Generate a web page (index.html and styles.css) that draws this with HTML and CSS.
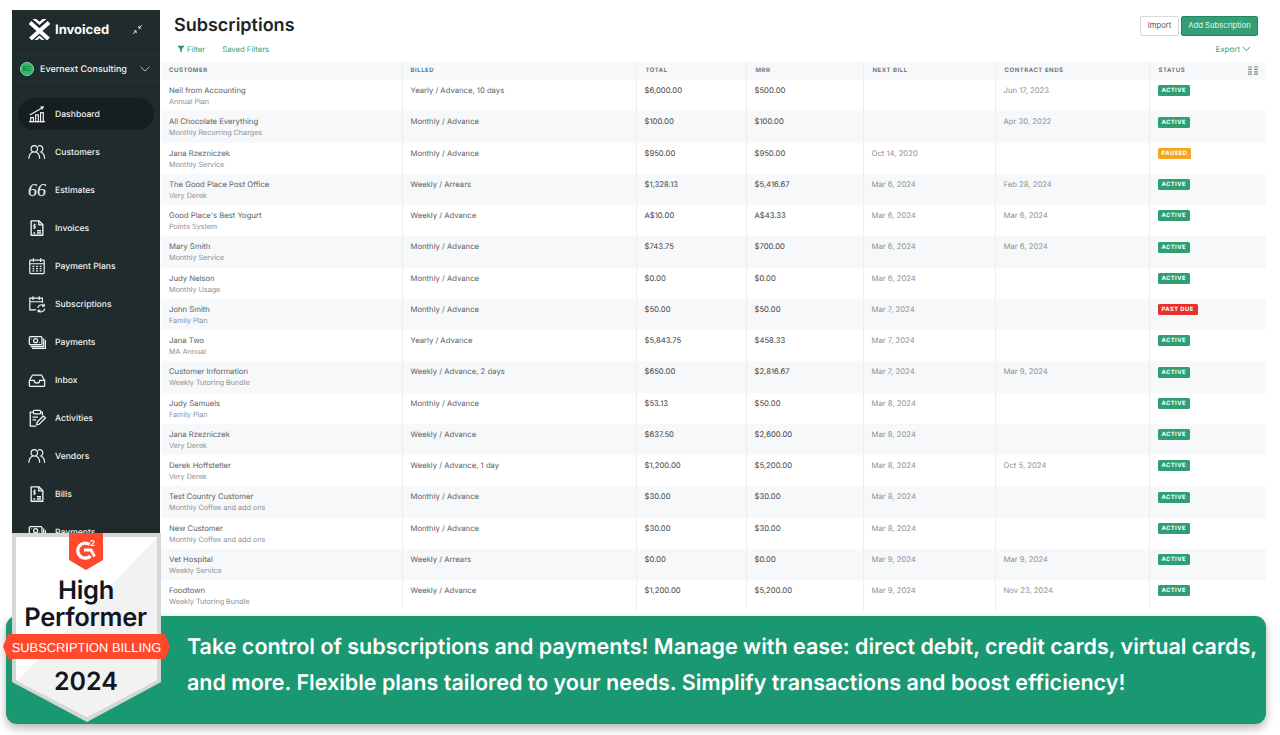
FILE: index.html
```html
<!DOCTYPE html>
<html lang="en">
<head>
<meta charset="utf-8">
<title>Subscriptions</title>
<link rel="stylesheet" href="styles.css">
</head>
<body>
<svg class="defs" width="0" height="0" aria-hidden="true">
  <symbol id="i-people" viewBox="0 0 20 20"><g fill="none" stroke="currentColor" stroke-width="1.300" stroke-linecap="round"><circle cx="7" cy="6.5" r="3.6"/><path d="M1 17c.3-3.8 2.300-6.300 4.300-7M8.700 10c2 .7 4 3.200 4.300 7"/><path d="M11.500 3.300c2.600-1 5 .8 5 3.300 0 1.600-1 2.900-2.200 3.400 2 .7 3.800 3.200 4.200 7"/></g></symbol>
  <symbol id="i-doc" viewBox="0 0 20 20"><g fill="none" stroke="currentColor" stroke-width="1.500" stroke-linejoin="round"><path d="M3.500 2h8.500l4.500 4.500V18h-13z"/><path d="M12 2v4.500h4.500"/><path d="M10 13h4.500M10 15.500h4.500M6 15.500h2"/><path d="M9 6.500H6.700c-1 0-1 1.700 0 1.700h1c1 0 1 1.800 0 1.800H5.500M7.200 5v6.300" stroke-width="1"/></g></symbol>
  <symbol id="i-cash" viewBox="0 0 20 20"><g fill="none" stroke="currentColor" stroke-width="1.400" stroke-linejoin="round"><rect x="1.500" y="4" width="14" height="9" rx="1"/><circle cx="8.500" cy="8.500" r="2.200"/><path d="M3.800 6.200h.6M12.600 10.800h.6"/><path d="M3.500 15h14V6.500M5 17h14.500V8.500" stroke-linecap="round"/></g></symbol>
</svg>

<div class="app">
  <aside class="sidebar">
    <div class="brand">
      <svg class="logo" viewBox="0 0 21 21" aria-hidden="true"><path d="M1 3.500 19.500 20M20 3.500 1.500 20" fill="none" stroke="#fff" stroke-width="4"/><path d="M3.500 0h3.800l3.200 2.700L13.700 0h3.800l-7 6z" fill="#fff"/><path d="M5.500 21l5-4.500 5 4.500h-3l-2-1.800-2 1.800z" fill="#fff"/></svg>
      <span class="brand-name">Invoiced</span>
      <svg class="collapse" viewBox="0 0 12 12" aria-hidden="true"><path d="M11 1 7.500 4.500M7.500 2v2.500H10M1 11l3.500-3.500M4.500 10V7.500H2" fill="none" stroke="#e8ecec" stroke-width="1"/></svg>
    </div>
    <div class="company">
      <span class="avatar">EC</span>
      <span class="company-name">Evernext Consulting</span>
      <svg class="chev" viewBox="0 0 10 6" aria-hidden="true"><path d="M.5.8 5 5 9.500.8" fill="none" stroke="#aeb6b7" stroke-width="1"/></svg>
    </div>
    <nav class="nav">
      <a class="nav-item is-active">
        <svg class="nav-icon" viewBox="0 0 20 20" aria-hidden="true"><g fill="none" stroke="currentColor" stroke-width="1.300"><path d="M1 18.500h18"/><rect x="3" y="14" width="3" height="4.500"/><rect x="8.500" y="11" width="3" height="7.500"/><rect x="14" y="8.500" width="3" height="10"/><path d="M2 11 15 3.500"/></g><path d="M18 1.500l-4.500.2 2.300 3.800z" fill="currentColor"/></svg>
        <span>Dashboard</span>
      </a>
      <a class="nav-item"><svg class="nav-icon" aria-hidden="true"><use href="#i-people"/></svg><span>Customers</span></a>
      <a class="nav-item"><span class="nav-icon quote">66</span><span>Estimates</span></a>
      <a class="nav-item"><svg class="nav-icon" aria-hidden="true"><use href="#i-doc"/></svg><span>Invoices</span></a>
      <a class="nav-item">
        <svg class="nav-icon" viewBox="0 0 20 20" aria-hidden="true"><g fill="none" stroke="currentColor" stroke-width="1.300"><rect x="2" y="3.500" width="16" height="15" rx="1"/><path d="M2 7.500h16M6 1.500v4M14 1.500v4"/><path d="M5 10.500h2M9 10.500h2M13 10.500h2M5 13h2M9 13h2M13 13h2M5 15.500h2M9 15.500h2M13 15.500h2" stroke-width="1.300"/></g></svg>
        <span>Payment Plans</span>
      </a>
      <a class="nav-item">
        <svg class="nav-icon" viewBox="0 0 20 20" aria-hidden="true"><g fill="none" stroke="currentColor" stroke-width="1.300"><path d="M9 16.500H2V3.500h14V9M2 7.500h14M5.500 1.500v4M12.500 1.500v4"/><path d="M11 14.500a4 4 0 0 1 6.800-2.500M18.500 15a4 4 0 0 1-6.800 2.500M18 9.800V12.300h-2.500M11.300 19.500V17h2.500"/></g></svg>
        <span>Subscriptions</span>
      </a>
      <a class="nav-item"><svg class="nav-icon" aria-hidden="true"><use href="#i-cash"/></svg><span>Payments</span></a>
      <a class="nav-item">
        <svg class="nav-icon" viewBox="0 0 20 20" aria-hidden="true"><g fill="none" stroke="currentColor" stroke-width="1.400" stroke-linejoin="round"><path d="M1.500 10.500 5 4.500h10l3.500 6V16a1 1 0 0 1-1 1h-15a1 1 0 0 1-1-1z"/><path d="M1.500 10.500h5.500c0 2 1.200 3 3 3s3-1 3-3h5.500"/></g></svg>
        <span>Inbox</span>
      </a>
      <a class="nav-item">
        <svg class="nav-icon" viewBox="0 0 20 20" aria-hidden="true"><g fill="none" stroke="currentColor" stroke-width="1.400" stroke-linejoin="round"><path d="M6 3.500H2.500V19H9M14 3.500h2V7"/><rect x="6" y="1.500" width="8" height="4" rx="1"/><path d="M5 9h6M5 12h4M9.500 17.500l.7-3L17 7.700l2.300 2.300-6.800 6.800z"/></g></svg>
        <span>Activities</span>
      </a>
      <a class="nav-item"><svg class="nav-icon" aria-hidden="true"><use href="#i-people"/></svg><span>Vendors</span></a>
      <a class="nav-item"><svg class="nav-icon" aria-hidden="true"><use href="#i-doc"/></svg><span>Bills</span></a>
      <a class="nav-item"><svg class="nav-icon" aria-hidden="true"><use href="#i-cash"/></svg><span>Payments</span></a>
    </nav>
  </aside>

  <main class="main">
    <header class="page-head">
      <div class="title-row">
        <h1>Subscriptions</h1>
        <div class="actions">
          <button class="btn">Import</button>
          <button class="btn btn-primary">Add Subscription</button>
        </div>
      </div>
      <div class="filter-row">
        <a class="link filter"><svg class="funnel" viewBox="0 0 10 10" aria-hidden="true"><path d="M.5 1h9L6 5.200V9.500L4 8V5.200z" fill="#1f9d72"/></svg>Filter</a>
        <a class="link">Saved Filters</a>
        <a class="link export">Export<svg class="export-chev" viewBox="0 0 10 6" aria-hidden="true"><path d="M1 1l4 4 4-4" fill="none" stroke="#1f9d72" stroke-width="1"/></svg></a>
      </div>
    </header>

    <table class="grid">
      <colgroup>
        <col class="c1"><col class="c2"><col class="c3"><col class="c4"><col class="c5"><col class="c6"><col class="c7">
      </colgroup>
      <thead>
        <tr>
          <th>Customer</th><th>Billed</th><th>Total</th><th>MRR</th><th>Next Bill</th><th>Contract Ends</th>
          <th class="status-head">Status<svg class="cols" viewBox="0 0 10 9" aria-hidden="true"><path d="M0 1h4M6 1h4M0 3.400h4M6 3.400h4M0 5.800h4M6 5.800h4M0 8.200h4M6 8.200h4" stroke="#8a9094" stroke-width="1.200"/></svg></th>
        </tr>
      </thead>
      <tbody>
        <tr><td><div class="name">Neil from Accounting</div><div class="sub">Annual Plan</div></td><td>Yearly / Advance, 10 days</td><td class="amt">$6,000.00</td><td class="amt">$500.00</td><td class="date"></td><td class="date">Jun 17, 2023</td><td><span class="tag active">Active</span></td></tr>
        <tr><td><div class="name">All Chocolate Everything</div><div class="sub">Monthly Recurring Charges</div></td><td>Monthly / Advance</td><td class="amt">$100.00</td><td class="amt">$100.00</td><td class="date"></td><td class="date">Apr 30, 2022</td><td><span class="tag active">Active</span></td></tr>
        <tr><td><div class="name">Jana Rzezniczek</div><div class="sub">Monthly Service</div></td><td>Monthly / Advance</td><td class="amt">$950.00</td><td class="amt">$950.00</td><td class="date">Oct 14, 2020</td><td class="date"></td><td><span class="tag paused">Paused</span></td></tr>
        <tr><td><div class="name">The Good Place Post Office</div><div class="sub">Very Derek</div></td><td>Weekly / Arrears</td><td class="amt">$1,328.13</td><td class="amt">$5,416.67</td><td class="date">Mar 6, 2024</td><td class="date">Feb 28, 2024</td><td><span class="tag active">Active</span></td></tr>
        <tr><td><div class="name">Good Place's Best Yogurt</div><div class="sub">Points System</div></td><td>Weekly / Advance</td><td class="amt">A$10.00</td><td class="amt">A$43.33</td><td class="date">Mar 6, 2024</td><td class="date">Mar 6, 2024</td><td><span class="tag active">Active</span></td></tr>
        <tr><td><div class="name">Mary Smith</div><div class="sub">Monthly Service</div></td><td>Monthly / Advance</td><td class="amt">$743.75</td><td class="amt">$700.00</td><td class="date">Mar 6, 2024</td><td class="date">Mar 6, 2024</td><td><span class="tag active">Active</span></td></tr>
        <tr><td><div class="name">Judy Nelson</div><div class="sub">Monthly Usage</div></td><td>Monthly / Advance</td><td class="amt">$0.00</td><td class="amt">$0.00</td><td class="date">Mar 6, 2024</td><td class="date"></td><td><span class="tag active">Active</span></td></tr>
        <tr><td><div class="name">John Smith</div><div class="sub">Family Plan</div></td><td>Monthly / Advance</td><td class="amt">$50.00</td><td class="amt">$50.00</td><td class="date">Mar 7, 2024</td><td class="date"></td><td><span class="tag due">Past Due</span></td></tr>
        <tr><td><div class="name">Jana Two</div><div class="sub">MA Annual</div></td><td>Yearly / Advance</td><td class="amt">$5,843.75</td><td class="amt">$458.33</td><td class="date">Mar 7, 2024</td><td class="date"></td><td><span class="tag active">Active</span></td></tr>
        <tr><td><div class="name">Customer Information</div><div class="sub">Weekly Tutoring Bundle</div></td><td>Weekly / Advance, 2 days</td><td class="amt">$650.00</td><td class="amt">$2,816.67</td><td class="date">Mar 7, 2024</td><td class="date">Mar 9, 2024</td><td><span class="tag active">Active</span></td></tr>
        <tr><td><div class="name">Judy Samuels</div><div class="sub">Family Plan</div></td><td>Monthly / Advance</td><td class="amt">$53.13</td><td class="amt">$50.00</td><td class="date">Mar 8, 2024</td><td class="date"></td><td><span class="tag active">Active</span></td></tr>
        <tr><td><div class="name">Jana Rzezniczek</div><div class="sub">Very Derek</div></td><td>Weekly / Advance</td><td class="amt">$637.50</td><td class="amt">$2,600.00</td><td class="date">Mar 8, 2024</td><td class="date"></td><td><span class="tag active">Active</span></td></tr>
        <tr><td><div class="name">Derek Hoffstetler</div><div class="sub">Very Derek</div></td><td>Weekly / Advance, 1 day</td><td class="amt">$1,200.00</td><td class="amt">$5,200.00</td><td class="date">Mar 8, 2024</td><td class="date">Oct 5, 2024</td><td><span class="tag active">Active</span></td></tr>
        <tr><td><div class="name">Test Country Customer</div><div class="sub">Monthly Coffee and add ons</div></td><td>Monthly / Advance</td><td class="amt">$30.00</td><td class="amt">$30.00</td><td class="date">Mar 8, 2024</td><td class="date"></td><td><span class="tag active">Active</span></td></tr>
        <tr><td><div class="name">New Customer</div><div class="sub">Monthly Coffee and add ons</div></td><td>Monthly / Advance</td><td class="amt">$30.00</td><td class="amt">$30.00</td><td class="date">Mar 8, 2024</td><td class="date"></td><td><span class="tag active">Active</span></td></tr>
        <tr><td><div class="name">Vet Hospital</div><div class="sub">Weekly Service</div></td><td>Weekly / Arrears</td><td class="amt">$0.00</td><td class="amt">$0.00</td><td class="date">Mar 9, 2024</td><td class="date">Mar 9, 2024</td><td><span class="tag active">Active</span></td></tr>
        <tr><td><div class="name">Foodtown</div><div class="sub">Weekly Tutoring Bundle</div></td><td>Weekly / Advance</td><td class="amt">$1,200.00</td><td class="amt">$5,200.00</td><td class="date">Mar 9, 2024</td><td class="date">Nov 23, 2024</td><td><span class="tag active">Active</span></td></tr>
      </tbody>
    </table>
  </main>
</div>

<aside class="promo">
  <p>Take control of subscriptions and payments! Manage with ease: direct debit, credit cards, virtual cards, and more. Flexible plans tailored to your needs. Simplify transactions and boost efficiency!</p>
</aside>

<svg class="badge" viewBox="0 0 174 192" aria-label="G2 High Performer badge">
  <path d="M9 0H158V149L84 189 9 149z" fill="#d5d7d6"/>
  <path d="M13 4H154V147L84 184 13 147z" fill="#fff"/>
  <path d="M154 5V147L84 184 14 148z" fill="#f2f2f3"/>
  <path d="M66 0h34v27l-17 10-17-10z" fill="#ff492c"/>
  <path d="M86.500 11.500a7.500 7.500 0 1 0 1 11.500" fill="none" stroke="#fff" stroke-width="3.200"/>
  <path d="M81 17h7l3.500 6.500" fill="none" stroke="#fff" stroke-width="2.800"/>
  <text x="89.500" y="12.500" class="g2-two">2</text>
  <text x="83" y="66" class="b-title">High</text>
  <text x="82.500" y="93" class="b-title">Performer</text>
  <path d="M5 101H162L167 113.500 162 126H5L0 113.500z" fill="#ff492c"/>
  <text x="83.500" y="118.500" class="b-cat">SUBSCRIPTION BILLING</text>
  <text x="83" y="157" class="b-year">2024</text>
</svg>
</body>
</html>
```
FILE: styles.css
```css
* { box-sizing: border-box; }
html, body { margin: 0; height: 100%; }
body {
  background: #fff;
  font-family: Inter, "Liberation Sans", sans-serif;
  overflow: hidden;
  position: relative;
  text-rendering: geometricPrecision;
}
.defs { position: absolute; }

.app {
  display: flex;
  height: 606px;
  margin: 10px 14px 0 12px;
  overflow: hidden;
}

/* Sidebar */
.sidebar {
  flex: 0 0 148px;
  background: #202b2d;
  color: #f1f4f4;
  display: flex;
  flex-direction: column;
}
.brand {
  height: 40px;
  display: flex;
  align-items: center;
  padding: 0 17px 0 17px;
  border-bottom: 1px solid #1b2527;
}
.logo { width: 21px; height: 21px; margin-top: -1px; }
.brand-name {
  font-size: 13px;
  font-weight: 700;
  margin-left: 5px;
  margin-top: 1px;
  flex: 1;
  color: #fff;
}
.collapse { width: 11px; height: 11px; }
.company {
  height: 38px;
  display: flex;
  align-items: center;
  padding: 0 10px 0 8px;
  border-bottom: 1px solid #1b2527;
}
.avatar {
  width: 14px;
  height: 14px;
  border-radius: 50%;
  background: #2fb866;
  color: #135c33;
  font-size: 6.500px;
  display: flex;
  align-items: center;
  justify-content: center;
  margin-right: 6px;
  border: 1px solid #7fdca3;
}
.company-name { font-size: 9px; font-weight: 500; flex: 1; white-space: nowrap; padding-top: 2px; }
.chev { width: 10px; height: 6px; }
.nav { padding: 10px 6px 0; display: flex; flex-direction: column; gap: 6px; }
.nav-item {
  height: 32px;
  flex: none;
  display: flex;
  align-items: center;
  gap: 9px;
  padding-left: 10px;
  border-radius: 16px;
  font-size: 8.600px;
  font-weight: 500;
}
.nav-item span:last-child { padding-top: 2px; }
.nav-item.is-active { background: #161e20; }
.nav-icon { width: 18px; height: 18px; flex: none; color: #f1f4f4; }
.quote {
  font-family: "Liberation Serif", serif;
  font-style: italic;
  font-size: 18px;
  line-height: 18px;
  letter-spacing: 0;
  white-space: nowrap;
}

/* Main */
.main { flex: 1; min-width: 0; padding-left: 1px; }
.page-head { height: 52px; }
.title-row {
  display: flex;
  justify-content: space-between;
  align-items: center;
  height: 31px;
  padding: 0 8px 0 13px;
}
h1 { margin: 0; font-size: 18px; font-weight: 600; color: #1d2528; }
.actions { display: flex; gap: 2px; }
.btn {
  height: 20px;
  padding: 0;
  width: 39px;
  background: #fff;
  border: 1px solid #d6dadc;
  border-radius: 2px;
  font: 400 7.700px Inter, "Liberation Sans", sans-serif;
  color: #555c60;
}
.btn-primary {
  width: 77px;
  background: #349f76;
  border-color: #1e8a62;
  color: #eaf6f1;
}
.filter-row {
  display: flex;
  align-items: center;
  height: 16px;
  padding: 0 15px 0 16px;
  font-size: 7.700px;
  color: #1f9d72;
}
.link { color: #2aa57b; white-space: nowrap; }
.filter { display: flex; align-items: center; gap: 2px; margin-right: 17px; }
.funnel { width: 8px; height: 8px; }
.export { margin-left: auto; display: flex; align-items: center; gap: 2px; font-size: 8px; }
.export-chev { width: 9px; height: 5.500px; }

/* Table */
.grid {
  width: 1105px;
  table-layout: fixed;
  border-collapse: collapse;
  font-size: 7.700px;
  color: #5a6266;
}
.c1 { width: 241px; }
.c2 { width: 234px; }
.c3 { width: 110px; }
.c4 { width: 117px; }
.c5 { width: 132px; }
.c6 { width: 154px; }
.grid th {
  height: 18px;
  background: #f6f8f9;
  padding: 0 0 2px 9px;
  text-align: left;
  font-size: 6px;
  font-weight: 600;
  letter-spacing: .55px;
  text-transform: uppercase;
  color: #5f676b;
  border-left: 1px solid #eceff0;
}
.grid th:nth-child(2) { padding-left: 8px; }
.grid th:first-child, .grid td:first-child { border-left: 0; padding-left: 8px; }
.status-head { position: relative; }
.cols { position: absolute; right: 8px; top: 4px; width: 10px; height: 9px; }
.grid td {
  height: 31.250px;
  padding: 5px 0 0 8px;
  vertical-align: top;
  border-left: 1px solid #eceff0;
  line-height: 11px;
  white-space: nowrap;
}
.grid tbody tr:nth-child(even) td { background: #f7f8fa; }
.sub { color: #8b9195; font-size: 7.200px; line-height: 11px; }
.amt { color: #3a4145; }
.date { color: #8b9195; }
.tag {
  display: inline-block;
  height: 11px;
  margin-top: .25px;
  padding: 0 4px;
  border-radius: 1.500px;
  color: #fff;
  font-size: 5.800px;
  font-weight: 700;
  letter-spacing: .45px;
  line-height: 11px;
  text-transform: uppercase;
  vertical-align: top;
}
.active { background: #2f9e72; }
.paused { background: #f5a623; }
.due { background: #e8302f; }

/* Promo banner */
.promo {
  position: absolute;
  left: 6px;
  top: 616px;
  width: 1260px;
  height: 108px;
  padding: 14px 0 0 181px;
  background: #1a9871;
  border-radius: 11px;
  box-shadow: 0 4px 10px rgba(0, 0, 0, .3);
}
.promo p {
  margin: 0;
  color: #fff;
  font-size: 21.500px;
  font-weight: 600;
  line-height: 35.500px;
}

/* G2 badge */
.badge {
  position: absolute;
  left: 3px;
  top: 533px;
  width: 174px;
  height: 192px;
}
.badge text { font-family: Inter, "Liberation Sans", sans-serif; text-anchor: middle; }
.b-title { font-size: 25.500px; font-weight: 600; fill: #14161f; letter-spacing: -.3px; }
.b-year { font-size: 25px; font-weight: 600; fill: #14161f; }
.badge .b-cat { font-family: "Liberation Sans", sans-serif; font-size: 12.900px; fill: #fff; }
.g2-two { font-size: 8px; font-weight: 700; fill: #fff; }
```
